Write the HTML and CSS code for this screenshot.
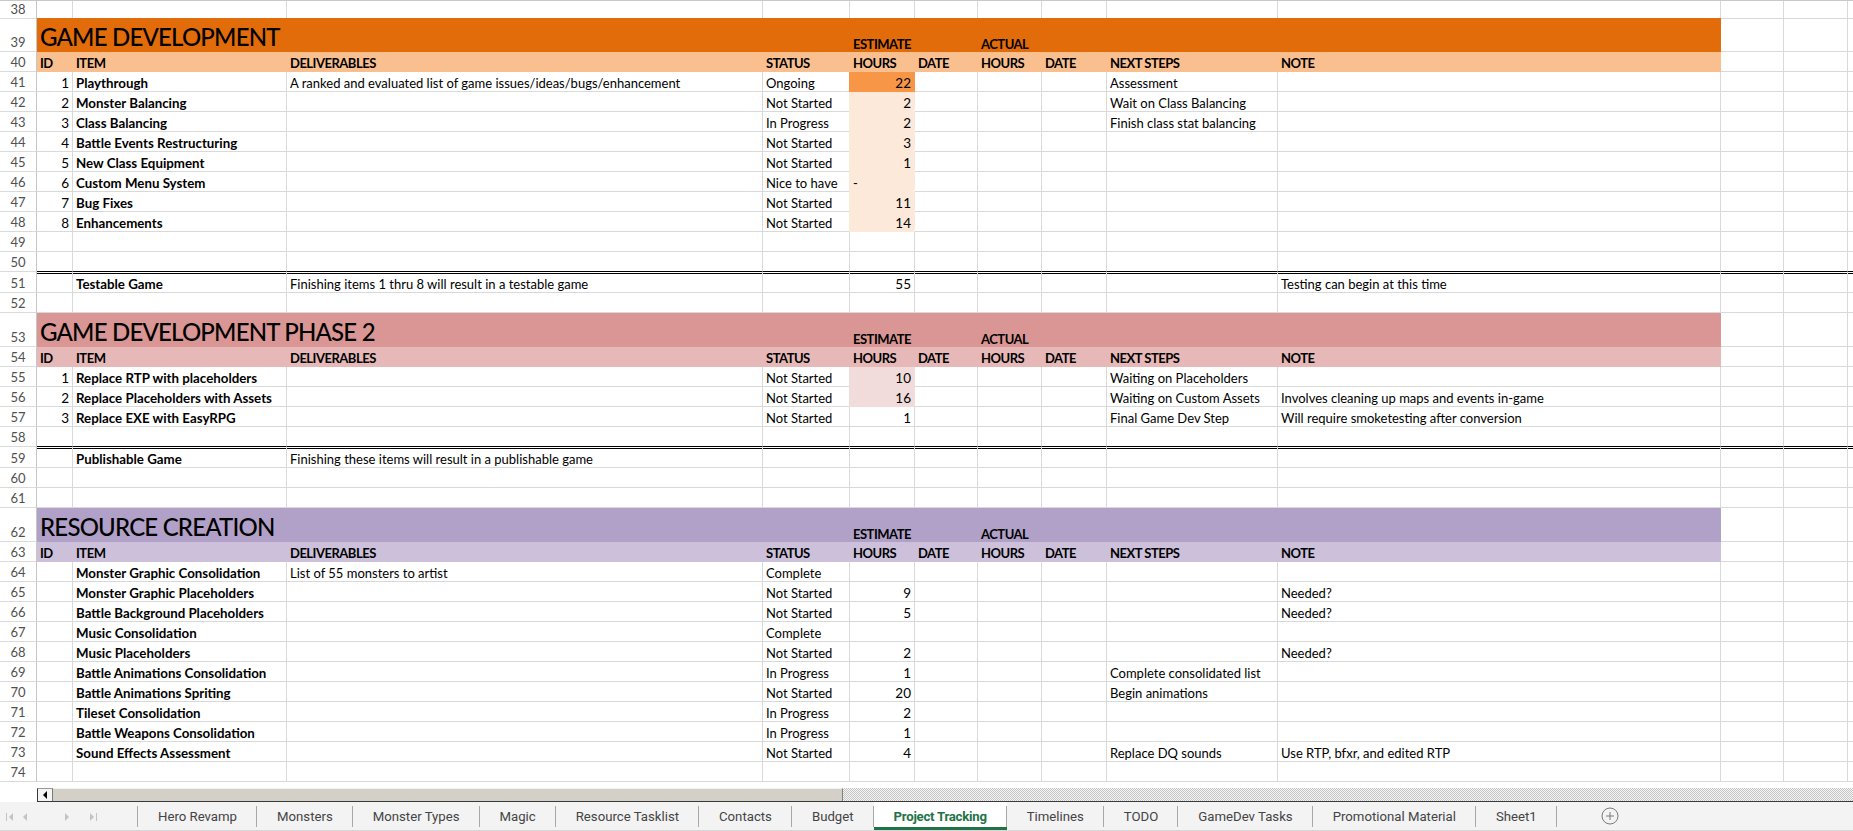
FILE: index.html
```html
<!DOCTYPE html>
<html lang="en">
<head>
<meta charset="utf-8">
<title>Project Tracking</title>
<link rel="stylesheet" href="styles.css">
</head>
<body>
<div class="app">
  <div class="sheet">
    <div class="row r38"><div class="rh">38</div><div class="c"></div><div class="c"></div><div class="c"></div><div class="c"></div><div class="c"></div><div class="c"></div><div class="c"></div><div class="c"></div><div class="c"></div><div class="c"></div><div class="c"></div><div class="c"></div><div class="c"></div></div>

    <div class="row title or"><div class="rh">39</div><div class="band"><div class="tt">GAME DEVELOPMENT</div><div class="lbl est">ESTIMATE</div><div class="lbl act">ACTUAL</div></div><div class="c"></div><div class="c"></div><div class="c"></div></div>
    <div class="row or"><div class="rh">40</div><div class="c h">ID</div><div class="c h">ITEM</div><div class="c h">DELIVERABLES</div><div class="c h">STATUS</div><div class="c h">HOURS</div><div class="c h">DATE</div><div class="c h">HOURS</div><div class="c h">DATE</div><div class="c h">NEXT STEPS</div><div class="c h">NOTE</div><div class="c"></div><div class="c"></div><div class="c"></div></div>
    <div class="row"><div class="rh">41</div><div class="c n">1</div><div class="c b">Playthrough</div><div class="c">A ranked and evaluated list of game issues/ideas/bugs/enhancement</div><div class="c">Ongoing</div><div class="c n f1">22</div><div class="c"></div><div class="c"></div><div class="c"></div><div class="c">Assessment</div><div class="c"></div><div class="c"></div><div class="c"></div><div class="c"></div></div>
    <div class="row"><div class="rh">42</div><div class="c n">2</div><div class="c b">Monster Balancing</div><div class="c"></div><div class="c">Not Started</div><div class="c n f2">2</div><div class="c"></div><div class="c"></div><div class="c"></div><div class="c">Wait on Class Balancing</div><div class="c"></div><div class="c"></div><div class="c"></div><div class="c"></div></div>
    <div class="row"><div class="rh">43</div><div class="c n">3</div><div class="c b">Class Balancing</div><div class="c"></div><div class="c">In Progress</div><div class="c n f2">2</div><div class="c"></div><div class="c"></div><div class="c"></div><div class="c">Finish class stat balancing</div><div class="c"></div><div class="c"></div><div class="c"></div><div class="c"></div></div>
    <div class="row"><div class="rh">44</div><div class="c n">4</div><div class="c b">Battle Events Restructuring</div><div class="c"></div><div class="c">Not Started</div><div class="c n f2">3</div><div class="c"></div><div class="c"></div><div class="c"></div><div class="c"></div><div class="c"></div><div class="c"></div><div class="c"></div><div class="c"></div></div>
    <div class="row"><div class="rh">45</div><div class="c n">5</div><div class="c b">New Class Equipment</div><div class="c"></div><div class="c">Not Started</div><div class="c n f2">1</div><div class="c"></div><div class="c"></div><div class="c"></div><div class="c"></div><div class="c"></div><div class="c"></div><div class="c"></div><div class="c"></div></div>
    <div class="row"><div class="rh">46</div><div class="c n">6</div><div class="c b">Custom Menu System</div><div class="c"></div><div class="c">Nice to have</div><div class="c f2">-</div><div class="c"></div><div class="c"></div><div class="c"></div><div class="c"></div><div class="c"></div><div class="c"></div><div class="c"></div><div class="c"></div></div>
    <div class="row"><div class="rh">47</div><div class="c n">7</div><div class="c b">Bug Fixes</div><div class="c"></div><div class="c">Not Started</div><div class="c n f2">11</div><div class="c"></div><div class="c"></div><div class="c"></div><div class="c"></div><div class="c"></div><div class="c"></div><div class="c"></div><div class="c"></div></div>
    <div class="row"><div class="rh">48</div><div class="c n">8</div><div class="c b">Enhancements</div><div class="c"></div><div class="c">Not Started</div><div class="c n f2">14</div><div class="c"></div><div class="c"></div><div class="c"></div><div class="c"></div><div class="c"></div><div class="c"></div><div class="c"></div><div class="c"></div></div>
    <div class="row"><div class="rh">49</div><div class="c"></div><div class="c"></div><div class="c"></div><div class="c"></div><div class="c"></div><div class="c"></div><div class="c"></div><div class="c"></div><div class="c"></div><div class="c"></div><div class="c"></div><div class="c"></div><div class="c"></div></div>
    <div class="row"><div class="rh">50</div><div class="c"></div><div class="c"></div><div class="c"></div><div class="c"></div><div class="c"></div><div class="c"></div><div class="c"></div><div class="c"></div><div class="c"></div><div class="c"></div><div class="c"></div><div class="c"></div><div class="c"></div></div>
    <div class="row total"><div class="rh">51</div><div class="c"></div><div class="c b">Testable Game</div><div class="c">Finishing items 1 thru 8 will result in a testable game</div><div class="c"></div><div class="c n">55</div><div class="c"></div><div class="c"></div><div class="c"></div><div class="c"></div><div class="c">Testing can begin at this time</div><div class="c"></div><div class="c"></div><div class="c"></div></div>
    <div class="row"><div class="rh">52</div><div class="c"></div><div class="c"></div><div class="c"></div><div class="c"></div><div class="c"></div><div class="c"></div><div class="c"></div><div class="c"></div><div class="c"></div><div class="c"></div><div class="c"></div><div class="c"></div><div class="c"></div></div>

    <div class="row title rd"><div class="rh">53</div><div class="band"><div class="tt">GAME DEVELOPMENT PHASE 2</div><div class="lbl est">ESTIMATE</div><div class="lbl act">ACTUAL</div></div><div class="c"></div><div class="c"></div><div class="c"></div></div>
    <div class="row rd"><div class="rh">54</div><div class="c h">ID</div><div class="c h">ITEM</div><div class="c h">DELIVERABLES</div><div class="c h">STATUS</div><div class="c h">HOURS</div><div class="c h">DATE</div><div class="c h">HOURS</div><div class="c h">DATE</div><div class="c h">NEXT STEPS</div><div class="c h">NOTE</div><div class="c"></div><div class="c"></div><div class="c"></div></div>
    <div class="row"><div class="rh">55</div><div class="c n">1</div><div class="c b">Replace RTP with placeholders</div><div class="c"></div><div class="c">Not Started</div><div class="c n f3">10</div><div class="c"></div><div class="c"></div><div class="c"></div><div class="c">Waiting on Placeholders</div><div class="c"></div><div class="c"></div><div class="c"></div><div class="c"></div></div>
    <div class="row"><div class="rh">56</div><div class="c n">2</div><div class="c b">Replace Placeholders with Assets</div><div class="c"></div><div class="c">Not Started</div><div class="c n f3">16</div><div class="c"></div><div class="c"></div><div class="c"></div><div class="c">Waiting on Custom Assets</div><div class="c">Involves cleaning up maps and events in-game</div><div class="c"></div><div class="c"></div><div class="c"></div></div>
    <div class="row"><div class="rh">57</div><div class="c n">3</div><div class="c b">Replace EXE with EasyRPG</div><div class="c"></div><div class="c">Not Started</div><div class="c n">1</div><div class="c"></div><div class="c"></div><div class="c"></div><div class="c">Final Game Dev Step</div><div class="c">Will require smoketesting after conversion</div><div class="c"></div><div class="c"></div><div class="c"></div></div>
    <div class="row"><div class="rh">58</div><div class="c"></div><div class="c"></div><div class="c"></div><div class="c"></div><div class="c"></div><div class="c"></div><div class="c"></div><div class="c"></div><div class="c"></div><div class="c"></div><div class="c"></div><div class="c"></div><div class="c"></div></div>
    <div class="row total"><div class="rh">59</div><div class="c"></div><div class="c b">Publishable Game</div><div class="c">Finishing these items will result in a publishable game</div><div class="c"></div><div class="c"></div><div class="c"></div><div class="c"></div><div class="c"></div><div class="c"></div><div class="c"></div><div class="c"></div><div class="c"></div><div class="c"></div></div>
    <div class="row"><div class="rh">60</div><div class="c"></div><div class="c"></div><div class="c"></div><div class="c"></div><div class="c"></div><div class="c"></div><div class="c"></div><div class="c"></div><div class="c"></div><div class="c"></div><div class="c"></div><div class="c"></div><div class="c"></div></div>
    <div class="row"><div class="rh">61</div><div class="c"></div><div class="c"></div><div class="c"></div><div class="c"></div><div class="c"></div><div class="c"></div><div class="c"></div><div class="c"></div><div class="c"></div><div class="c"></div><div class="c"></div><div class="c"></div><div class="c"></div></div>

    <div class="row title pu"><div class="rh">62</div><div class="band"><div class="tt">RESOURCE CREATION</div><div class="lbl est">ESTIMATE</div><div class="lbl act">ACTUAL</div></div><div class="c"></div><div class="c"></div><div class="c"></div></div>
    <div class="row pu"><div class="rh">63</div><div class="c h">ID</div><div class="c h">ITEM</div><div class="c h">DELIVERABLES</div><div class="c h">STATUS</div><div class="c h">HOURS</div><div class="c h">DATE</div><div class="c h">HOURS</div><div class="c h">DATE</div><div class="c h">NEXT STEPS</div><div class="c h">NOTE</div><div class="c"></div><div class="c"></div><div class="c"></div></div>
    <div class="row"><div class="rh">64</div><div class="c"></div><div class="c b">Monster Graphic Consolidation</div><div class="c">List of 55 monsters to artist</div><div class="c">Complete</div><div class="c"></div><div class="c"></div><div class="c"></div><div class="c"></div><div class="c"></div><div class="c"></div><div class="c"></div><div class="c"></div><div class="c"></div></div>
    <div class="row"><div class="rh">65</div><div class="c"></div><div class="c b">Monster Graphic Placeholders</div><div class="c"></div><div class="c">Not Started</div><div class="c n">9</div><div class="c"></div><div class="c"></div><div class="c"></div><div class="c"></div><div class="c">Needed?</div><div class="c"></div><div class="c"></div><div class="c"></div></div>
    <div class="row"><div class="rh">66</div><div class="c"></div><div class="c b">Battle Background Placeholders</div><div class="c"></div><div class="c">Not Started</div><div class="c n">5</div><div class="c"></div><div class="c"></div><div class="c"></div><div class="c"></div><div class="c">Needed?</div><div class="c"></div><div class="c"></div><div class="c"></div></div>
    <div class="row"><div class="rh">67</div><div class="c"></div><div class="c b">Music Consolidation</div><div class="c"></div><div class="c">Complete</div><div class="c"></div><div class="c"></div><div class="c"></div><div class="c"></div><div class="c"></div><div class="c"></div><div class="c"></div><div class="c"></div><div class="c"></div></div>
    <div class="row"><div class="rh">68</div><div class="c"></div><div class="c b">Music Placeholders</div><div class="c"></div><div class="c">Not Started</div><div class="c n">2</div><div class="c"></div><div class="c"></div><div class="c"></div><div class="c"></div><div class="c">Needed?</div><div class="c"></div><div class="c"></div><div class="c"></div></div>
    <div class="row"><div class="rh">69</div><div class="c"></div><div class="c b">Battle Animations Consolidation</div><div class="c"></div><div class="c">In Progress</div><div class="c n">1</div><div class="c"></div><div class="c"></div><div class="c"></div><div class="c">Complete consolidated list</div><div class="c"></div><div class="c"></div><div class="c"></div><div class="c"></div></div>
    <div class="row"><div class="rh">70</div><div class="c"></div><div class="c b">Battle Animations Spriting</div><div class="c"></div><div class="c">Not Started</div><div class="c n">20</div><div class="c"></div><div class="c"></div><div class="c"></div><div class="c">Begin animations</div><div class="c"></div><div class="c"></div><div class="c"></div><div class="c"></div></div>
    <div class="row"><div class="rh">71</div><div class="c"></div><div class="c b">Tileset Consolidation</div><div class="c"></div><div class="c">In Progress</div><div class="c n">2</div><div class="c"></div><div class="c"></div><div class="c"></div><div class="c"></div><div class="c"></div><div class="c"></div><div class="c"></div><div class="c"></div></div>
    <div class="row"><div class="rh">72</div><div class="c"></div><div class="c b">Battle Weapons Consolidation</div><div class="c"></div><div class="c">In Progress</div><div class="c n">1</div><div class="c"></div><div class="c"></div><div class="c"></div><div class="c"></div><div class="c"></div><div class="c"></div><div class="c"></div><div class="c"></div></div>
    <div class="row"><div class="rh">73</div><div class="c"></div><div class="c b">Sound Effects Assessment</div><div class="c"></div><div class="c">Not Started</div><div class="c n">4</div><div class="c"></div><div class="c"></div><div class="c"></div><div class="c">Replace DQ sounds</div><div class="c">Use RTP, bfxr, and edited RTP</div><div class="c"></div><div class="c"></div><div class="c"></div></div>
    <div class="row"><div class="rh">74</div><div class="c"></div><div class="c"></div><div class="c"></div><div class="c"></div><div class="c"></div><div class="c"></div><div class="c"></div><div class="c"></div><div class="c"></div><div class="c"></div><div class="c"></div><div class="c"></div><div class="c"></div></div>
  </div>

  <div class="hscroll">
    <div class="sb">
      <div class="sb-btn"><span class="tri"></span></div>
      <div class="sb-thumb"></div>
      <div class="sb-track"></div>
    </div>
  </div>

  <div class="tabs">
    <div class="nav">
      <svg width="137" height="28" viewBox="0 0 137 28">
        <g fill="#c4c4c4">
          <rect x="6" y="11" width="1" height="8"/>
          <path d="M13 11 L9 15 L13 19 Z"/>
          <path d="M27 11 L23 15 L27 19 Z"/>
          <path d="M65 11 L69 15 L65 19 Z"/>
          <path d="M90 11 L94 15 L90 19 Z"/>
          <rect x="96" y="11" width="1" height="8"/>
        </g>
      </svg>
    </div>
    <div class="tab">Hero Revamp</div>
    <div class="tab">Monsters</div>
    <div class="tab">Monster Types</div>
    <div class="tab">Magic</div>
    <div class="tab">Resource Tasklist</div>
    <div class="tab">Contacts</div>
    <div class="tab">Budget</div>
    <div class="tab active">Project Tracking</div>
    <div class="tab">Timelines</div>
    <div class="tab">TODO</div>
    <div class="tab">GameDev Tasks</div>
    <div class="tab">Promotional Material</div>
    <div class="tab">Sheet1</div>
    <div class="add">
      <svg width="18" height="18" viewBox="0 0 18 18">
        <circle cx="9" cy="9" r="8" fill="none" stroke="#7a7a7a" stroke-width="1"/>
        <path d="M9 5 V13 M5 9 H13" stroke="#7a7a7a" stroke-width="1"/>
      </svg>
    </div>
  </div>
</div>
</body>
</html>
```

FILE: styles.css
```css
* { box-sizing: border-box; }

html, body {
  margin: 0;
  padding: 0;
  background: #fff;
}

body {
  width: 1853px;
  height: 831px;
  overflow: hidden;
  font-family: Lato, "Liberation Sans", sans-serif;
  color: #000;
}

.app {
  display: flex;
  flex-direction: column;
  height: 831px;
}

.sheet {
  height: 782px;
  overflow: hidden;
  border-top: 1px solid #c8c8c8;
}

.row {
  display: grid;
  grid-template-columns: 37px 36px 214px 476px 87px 65px 63px 64px 65px 171px 443px 63px 64px 1fr;
  height: 20px;
}

.row.r38 { height: 17px; }
.row.title { height: 34px; }
.row.total { height: 21px; }

.rh {
  display: flex;
  align-items: flex-end;
  justify-content: center;
  border-right: 1px solid #c6c6c6;
  border-bottom: 1px solid #dadada;
  font-size: 13px;
  line-height: 16px;
  color: #505050;
  padding-bottom: 1px;
}

.c {
  display: flex;
  align-items: flex-end;
  padding: 0 3px 0 3px;
  border-right: 1px solid #d9d9d9;
  border-bottom: 1px solid #d9d9d9;
  font-size: 13px;
  line-height: 16px;
  white-space: nowrap;
  overflow: visible;
  min-width: 0;
}

.c.n { justify-content: flex-end; font-size: 13.5px; }
.c.b { font-weight: 700; font-size: 13.3px; }

/* header label cells */
.c.h {
  font-weight: 700;
  font-size: 13px;
  letter-spacing: -0.5px;
  border-color: transparent;
}
.or .c.h { background: #fabf8f; }
.rd .c.h { background: #e6b8b7; }
.pu .c.h { background: #ccc0da; }

/* title band */
.band {
  grid-column: 2 / 12;
  display: grid;
  grid-template-columns: 36px 214px 476px 87px 65px 63px 64px 65px 171px 443px;
  align-items: end;
}
.or .band { background: #e26b0a; }
.rd .band { background: #da9694; }
.pu .band { background: #b1a0c7; }

.tt {
  grid-column: 1;
  grid-row: 1;
  padding-left: 3px;
  font-size: 24px;
  font-weight: 500;
  letter-spacing: -0.8px;
  line-height: 28px;
  white-space: nowrap;
  padding-bottom: 1px;
}

.lbl {
  grid-row: 1;
  padding-left: 3px;
  font-weight: 700;
  font-size: 13px;
  letter-spacing: -0.5px;
  line-height: 16px;
  white-space: nowrap;
}
.lbl.est { grid-column: 5; }
.lbl.act { grid-column: 7; }

/* filled hour cells */
.c.f1 { background: #f79646; border-color: transparent; box-shadow: -1px 0 0 #f79646; }
.c.f2 { background: #fde9d9; border-color: transparent; box-shadow: -1px 0 0 #fde9d9; }
.c.f3 { background: #f2dcdb; border-color: transparent; box-shadow: -1px 0 0 #f2dcdb; }

/* double top border rows */
.row:has(+ .total) > .c { border-bottom-color: #000; }
.row.total > .c { box-shadow: inset 0 1px 0 #fff, inset 0 2px 0 #000; }

/* horizontal scrollbar */
.hscroll {
  height: 20px;
  display: flex;
  padding: 6px 0 0 37px;
}
.sb {
  flex: 1;
  display: flex;
  height: 14px;
  border-bottom: 1px solid #3a3a3a;
}
.sb-btn {
  width: 16px;
  background: #f4f4f4;
  border-left: 1px solid #3a3a3a;
  border-top: 1px solid #9a9a9a;
  border-right: 1px solid #7a7a7a;
  display: flex;
  align-items: center;
  justify-content: center;
}
.tri {
  width: 0;
  height: 0;
  border-style: solid;
  border-width: 4px 4px 4px 0;
  border-color: transparent #000 transparent transparent;
}
.sb-thumb {
  width: 790px;
  background: #d4d0c8;
  border-top: 1px solid #f2f2f2;
  border-right: 1px solid #808080;
}
.sb-track {
  flex: 1;
  background: repeating-conic-gradient(#c6c6c6 0 25%, #f4f4f4 0 50%) 0 0 / 2px 2px;
}

/* sheet tabs */
.tabs {
  height: 29px;
  display: flex;
  background: #f3f3f3;
  border-bottom: 1px solid #d6d6d6;
  font-family: Roboto, "Liberation Sans", sans-serif;
  font-size: 13.2px;
  color: #444;
}
.nav {
  width: 138px;
  background: linear-gradient(#a8a8a8, #a8a8a8) right 4px / 1px 21px no-repeat;
}
.nav svg { display: block; }
.tab {
  display: flex;
  align-items: center;
  padding: 0 20px;
  white-space: nowrap;
  background: linear-gradient(#a8a8a8, #a8a8a8) right 4px / 1px 21px no-repeat;
}
.tab.active {
  background: #fff linear-gradient(#a8a8a8, #a8a8a8) right 4px / 1px 21px no-repeat;
  color: #217346;
  font-weight: 700;
  letter-spacing: -0.25px;
  border-bottom: 3px solid #217346;
  padding-top: 3px;
}
.add {
  display: flex;
  align-items: center;
  margin-left: 44px;
}
.add svg { display: block; }
```
